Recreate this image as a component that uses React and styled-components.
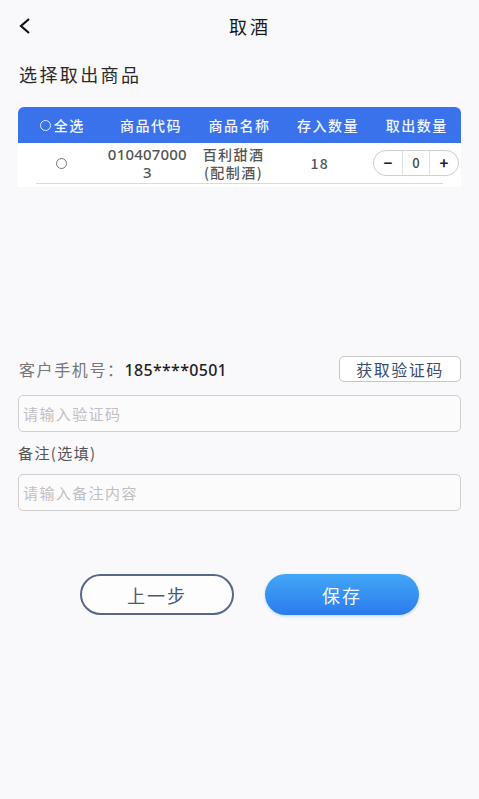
import styled, { createGlobalStyle } from "styled-components";

const GlobalStyle = createGlobalStyle`
    * { box-sizing: border-box; }
    body {
        margin: 0;
        background: #f9f9fb;
        font-family: "Noto Sans CJK SC", "Noto Sans", sans-serif;
    }
`;

const Page = styled.div`
    width: 479px;
    min-height: 799px;
    background: #f9f9fb;
    padding: 0 18px;
`;

const NavBar = styled.div`
    height: 52px;
    display: flex;
    align-items: center;
    justify-content: center;
    position: relative;
`;

const BackButton = styled.button`
    position: absolute;
    left: 0;
    top: 14px;
    width: 24px;
    height: 24px;
    padding: 0;
    border: none;
    background: none;
    display: flex;
    align-items: center;
`;

const NavTitle = styled.h1`
    margin: 0;
    font-size: 18px;
    font-weight: 400;
    letter-spacing: 3px;
    color: #1a1a1a;
    padding-left: 21px;
`;

const SectionTitle = styled.h2`
    margin: 10px 0 0 1px;
    font-size: 18px;
    font-weight: 400;
    letter-spacing: 2.4px;
    color: #2a2a2a;
    line-height: 24px;
`;

const Table = styled.div`
    margin-top: 21px;
    background: #fff;
    border-radius: 6px 6px 0 0;
    overflow: hidden;
`;

const Row = styled.div`
    display: grid;
    grid-template-columns: repeat(5, 1fr);
    align-items: center;
    height: ${(p) => p.$height}px;
    background: ${(p) => (p.$head ? "#3a72ec" : "#fff")};
    color: ${(p) => (p.$head ? "#f2f5ff" : "#555")};
    font-size: 14px;
    font-weight: 500;
    letter-spacing: 1.5px;
`;

const Cell = styled.div`
    text-align: center;
    line-height: 18px;
    display: flex;
    justify-content: center;
    align-items: center;
    word-break: break-all;
    padding: 0 2px;
`;

const CodeText = styled.span`
    font-family: "Noto Sans", sans-serif;
    font-size: 15px;
    letter-spacing: 0.2px;
    line-height: 18px;
    max-width: 82px;
`;

const Radio = styled.span`
    display: inline-block;
    flex: none;
    width: ${(p) => p.$size}px;
    height: ${(p) => p.$size}px;
    border-radius: 50%;
    border: 1px solid ${(p) => p.$color};
    margin-right: ${(p) => p.$gap}px;
`;

const RowLine = styled.div`
    height: 1px;
    background: #d9d9d9;
    margin: 0 18px 3px 18px;
`;

const Stepper = styled.div`
    display: flex;
    align-items: center;
    height: 26px;
    border: 1px solid #cfcfcf;
    border-radius: 13px;
    margin-left: 8px;
    letter-spacing: 0;
`;

const StepBtn = styled.span`
    width: 28px;
    text-align: center;
    color: #222;
    font-size: 15px;
    font-weight: 600;
`;

const StepValue = styled.span`
    width: 28px;
    text-align: center;
    font-size: 13px;
    color: #444;
    line-height: 24px;
    border-left: 1px solid #e0e0e0;
    border-right: 1px solid #e0e0e0;
`;

const Form = styled.div`
    margin-top: 169px;
`;

const PhoneRow = styled.div`
    display: flex;
    align-items: center;
    justify-content: space-between;
    height: 26px;
`;

const PhoneLabel = styled.div`
    font-size: 16px;
    color: #777;
    letter-spacing: 1.6px;
    padding-left: 1px;
`;

const PhoneValue = styled.span`
    color: #1e1e1e;
    font-weight: 500;
    font-size: 16px;
    letter-spacing: 0.3px;
    font-family: "Noto Sans", "Noto Sans CJK SC", sans-serif;
`;

const CodeButton = styled.button`
    width: 122px;
    height: 26px;
    border: 1px solid #c8c8c8;
    border-radius: 5px;
    background: #fff;
    color: #3b4c6e;
    font-size: 16px;
    letter-spacing: 1.5px;
    font-family: inherit;
    padding: 0;
`;

const Input = styled.input`
    display: block;
    width: 100%;
    height: 37px;
    margin-top: ${(p) => p.$top}px;
    border: 1px solid #cfcfcf;
    border-radius: 5px;
    background: #fbfbfc;
    padding: 0 4px;
    font-size: 15px;
    letter-spacing: 1.4px;
    font-family: inherit;
    color: #333;
    &::placeholder { color: #c0c0c4; }
`;

const FieldLabel = styled.div`
    margin-top: 10px;
    font-size: 15px;
    letter-spacing: 1.4px;
    color: #555;
    line-height: 22px;
`;

const Actions = styled.div`
    display: flex;
    gap: 31px;
    margin: 63px 0 0 62px;
`;

const ActionButton = styled.button`
    width: 154px;
    height: 41px;
    border-radius: 21px;
    font-size: 18px;
    letter-spacing: 2px;
    font-family: inherit;
    border: ${(p) => (p.$primary ? "none" : "2px solid #56678a")};
    background: ${(p) => (p.$primary ? "linear-gradient(180deg, #43a6f7 0%, #2a7ceb 100%)" : "#fdfdfe")};
    color: ${(p) => (p.$primary ? "#f4f8ff" : "#48597b")};
    box-shadow: ${(p) => (p.$primary ? "0 1px 3px rgba(42,124,235,0.3)" : "none")};
`;

export default function App() {
  return (
    <Page>
      <GlobalStyle />
      <NavBar>
        <BackButton>
          <svg width="14" height="18" viewBox="0 0 14 18">
            <path d="M11 2 L3 9 L11 16" fill="none" stroke="#111" strokeWidth="2.2" />
          </svg>
        </BackButton>
        <NavTitle>取酒</NavTitle>
      </NavBar>
      <SectionTitle>选择取出商品</SectionTitle>
      <Table>
        <Row $head $height={36}>
          <Cell><Radio $size={11} $color="#e6ecff" $gap={3} />全选</Cell>
          <Cell>商品代码</Cell>
          <Cell>商品名称</Cell>
          <Cell>存入数量</Cell>
          <Cell>取出数量</Cell>
        </Row>
        <Row $height={40}>
          <Cell><Radio $size={11} $color="#777" $gap={0} /></Cell>
          <Cell><CodeText>0104070003</CodeText></Cell>
          <Cell>百利甜酒<br />(配制酒)</Cell>
          <Cell>18</Cell>
          <Cell>
            <Stepper>
              <StepBtn>−</StepBtn>
              <StepValue>0</StepValue>
              <StepBtn>+</StepBtn>
            </Stepper>
          </Cell>
        </Row>
        <RowLine />
      </Table>
      <Form>
        <PhoneRow>
          <PhoneLabel>客户手机号：<PhoneValue>185****0501</PhoneValue></PhoneLabel>
          <CodeButton>获取验证码</CodeButton>
        </PhoneRow>
        <Input $top={13} placeholder="请输入验证码" />
        <FieldLabel>备注(选填)</FieldLabel>
        <Input $top={10} placeholder="请输入备注内容" />
      </Form>
      <Actions>
        <ActionButton>上一步</ActionButton>
        <ActionButton $primary>保存</ActionButton>
      </Actions>
    </Page>
  );
}
